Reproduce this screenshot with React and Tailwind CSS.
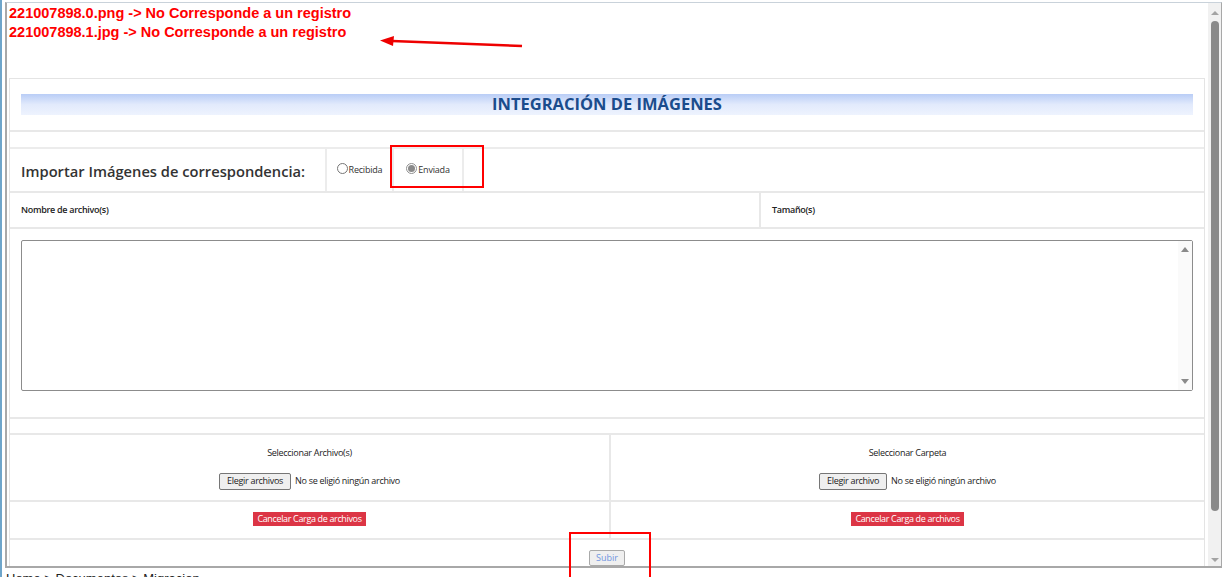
import React from "react";

function Radio({ checked, label }) {
  return (
    <label className="flex items-center gap-[1px] text-[9px] tracking-[-0.2px] text-[#333]">
      <span
        className={
          "flex h-[11px] w-[11px] items-center justify-center rounded-full border " +
          (checked ? "border-[#8f8f8f] bg-white" : "border-[#767676] bg-white")
        }
      >
        {checked && <span className="h-[7px] w-[7px] rounded-full bg-[#8a8a8a]" />}
      </span>
      <span className="mt-[3px]">{label}</span>
    </label>
  );
}

function FileInput({ text }) {
  return (
    <div className="flex items-center justify-center gap-[4px] whitespace-nowrap text-[9px] tracking-[-0.3px] text-[#222]">
      <span className="flex h-[17px] items-center rounded-[2px] border border-[#767676] bg-[#efefef] px-[7px]">
        {text}
      </span>
      <span>No se eligió ningún archivo</span>
    </div>
  );
}

function CancelButton() {
  return (
    <span className="flex h-[14px] w-[113px] items-center justify-center whitespace-nowrap bg-[#dc3545] text-[9px] tracking-[-0.35px] text-white">
      Cancelar Carga de archivos
    </span>
  );
}

export default function App() {
  return (
    <div className="relative h-[577px] w-[1227px] overflow-hidden bg-white font-['Open_Sans',sans-serif]">
      <div className="flex h-full">
        <div className="w-[2px] shrink-0 bg-[#6ea5ca]" />
        <div className="ml-[3px] mt-[2px] flex w-[1217px] flex-col">
          {/* marco */}
          <div className="flex h-[566px] shrink-0 border-b-2 border-l-2 border-r border-t border-[#a8a8a8] border-t-[#c9d2da]">
            <div className="flex flex-1 flex-col overflow-hidden pl-[2px]">
              <div className="h-[75px] shrink-0 pt-[1px] font-['Liberation_Sans',Arial,sans-serif] text-[14.5px] font-bold leading-[19px] text-[#ff0000]">
                <div>221007898.0.png -&gt; No Corresponde a un registro</div>
                <div>221007898.1.jpg -&gt; No Corresponde a un registro</div>
              </div>

              <div className="w-[1196px] shrink-0 border border-[#e4e4e4]">
                {/* título */}
                <div className="flex h-[53px] items-center border-b-2 border-[#e8e8e8] px-[11px]">
                  <div className="flex h-[21px] w-full items-center justify-center bg-gradient-to-b from-[#b9cdf6] via-[#e2eafc] to-[#eef3fe]">
                    <span className="text-[16.5px] font-bold text-[#1b4c8c]">INTEGRACIÓN DE IMÁGENES</span>
                  </div>
                </div>
                <div className="h-[17px] border-b-2 border-[#ececec]" />

                {/* importar */}
                <div className="flex h-[44px] border-b-2 border-[#e8e8e8]">
                  <div className="flex w-[317px] items-center border-r-2 border-[#ececec] pl-[11px] pt-[2px]">
                    <span className="text-[14.7px] font-semibold text-[#333]">Importar Imágenes de correspondencia:</span>
                  </div>
                  <div className="flex w-[67px] items-center justify-center border-r-2 border-[#ececec] pb-[4px]">
                    <Radio label="Recibida" />
                  </div>
                  <div className="flex w-[70px] items-center justify-center border-r-2 border-[#ececec] pb-[4px]">
                    <Radio checked label="Enviada" />
                  </div>
                </div>

                {/* encabezados */}
                <div className="flex h-[36px] border-b-2 border-[#e8e8e8] text-[9px] font-semibold tracking-[-0.3px] text-[#222]">
                  <div className="flex w-[751px] items-center border-r-2 border-[#e8e8e8] pl-[11px]">
                    Nombre de archivo(s)
                  </div>
                  <div className="flex items-center pl-[11px]">Tamaño(s)</div>
                </div>

                {/* lista */}
                <div className="h-[190px] border-b-2 border-[#e8e8e8] px-[11px] pt-[11px]">
                  <div className="relative h-[151px] rounded-[2px] border border-[#8c8c8c] bg-white">
                    <div className="absolute right-0 top-0 flex h-full w-[14px] flex-col items-center justify-between bg-[#fafafa] py-[6px]">
                      <span className="h-0 w-0 border-x-[4px] border-b-[5px] border-x-transparent border-b-[#8a8a8a]" />
                      <span className="h-0 w-0 border-x-[4px] border-t-[5px] border-x-transparent border-t-[#8a8a8a]" />
                    </div>
                  </div>
                </div>
                <div className="h-[16px] border-b-2 border-[#e8e8e8]" />

                {/* selección */}
                <div className="flex h-[67px] border-b-2 border-[#e8e8e8]">
                  <div className="flex w-[601px] flex-col items-center border-r-2 border-[#e8e8e8] pt-[11px] text-[9px] tracking-[-0.3px] text-[#222]">
                    <span>Seleccionar Archivo(s)</span>
                    <div className="mt-[13px]">
                      <FileInput text="Elegir archivos" />
                    </div>
                  </div>
                  <div className="flex flex-1 flex-col items-center pt-[11px] text-[9px] tracking-[-0.3px] text-[#222]">
                    <span>Seleccionar Carpeta</span>
                    <div className="mt-[13px]">
                      <FileInput text="Elegir archivo" />
                    </div>
                  </div>
                </div>

                <div className="flex h-[38px] border-b-2 border-[#e8e8e8]">
                  <div className="flex w-[601px] items-center justify-center border-r-2 border-[#e8e8e8] pb-[2px]">
                    <CancelButton />
                  </div>
                  <div className="flex flex-1 items-center justify-center pb-[2px]">
                    <CancelButton />
                  </div>
                </div>

                <div className="flex h-[40px] justify-center pt-[10px]">
                  <span className="flex h-[16px] items-center rounded-[2px] border border-[#a9a9a9] bg-[#efefef] px-[6px] text-[9px] text-[#6f95e0]">
                    Subir
                  </span>
                </div>
              </div>
            </div>

            {/* barra de desplazamiento */}
            <div className="flex w-[13px] shrink-0 flex-col items-center bg-[#f1f1f1] pt-[8px]">
              <span className="h-0 w-0 border-x-[4px] border-b-[4px] border-x-transparent border-b-[#a3a3a3]" />
              <div className="mt-[6px] h-[490px] w-[8px] rounded-full bg-[#8a8a8a]" />
              <span className="mt-[47px] h-0 w-0 border-x-[4px] border-t-[4px] border-x-transparent border-t-[#a3a3a3]" />
            </div>
          </div>
          <div className="pl-[1px] pt-[4px] font-['Liberation_Sans',Arial,sans-serif] text-[13px] leading-[14px] text-[#222]">
            Home &gt; Documentos &gt; Migracion
          </div>
        </div>
      </div>

      {/* anotaciones */}
      <svg className="absolute left-0 top-0" width="1227" height="577">
        <line x1="522" y1="46" x2="392" y2="41" stroke="#ee0000" strokeWidth="2.5" />
        <polygon points="380,40.5 394,36 393,46" fill="#ee0000" />
      </svg>
      <div className="absolute left-[390px] top-[145px] h-[43px] w-[94px] border-2 border-[#ff0000]" />
      <div className="absolute left-[569px] top-[532px] h-[50px] w-[82px] border-2 border-[#ff0000]" />
    </div>
  );
}
